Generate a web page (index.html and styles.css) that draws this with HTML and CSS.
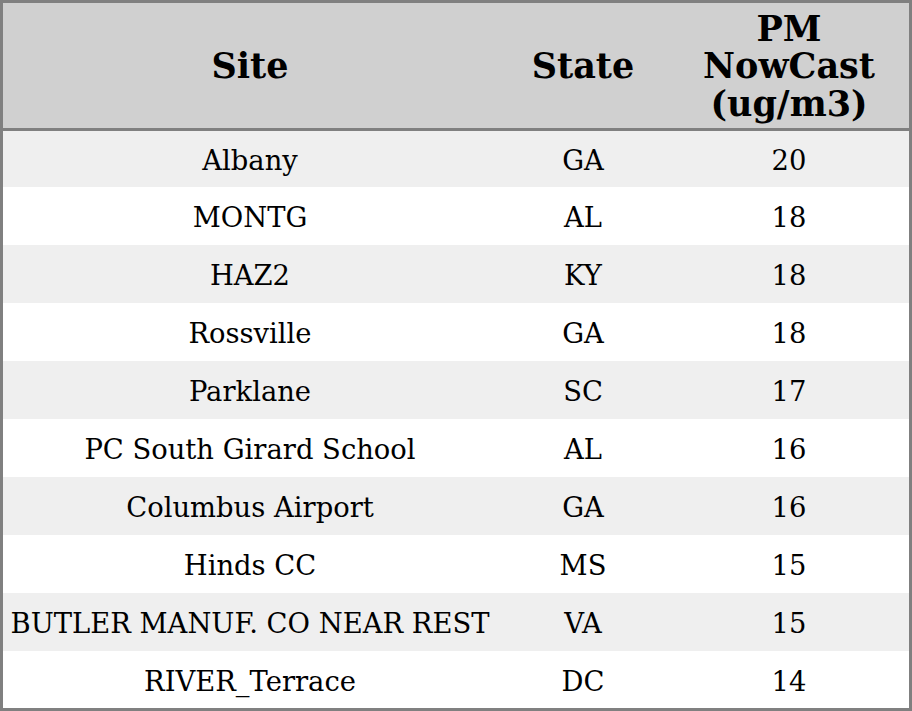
FILE: index.html
```html
<!DOCTYPE html>
<html>
<head>
<meta charset="utf-8">
<link rel="stylesheet" href="styles.css">
</head>
<body>
<table class="aq">
  <thead>
    <tr class="head">
      <th class="c-site">Site</th>
      <th class="c-state">State</th>
      <th class="c-pm">PM<br>NowCast<br>(ug/m3)</th>
    </tr>
  </thead>
  <tbody>
    <tr><td>Albany</td><td>GA</td><td>20</td></tr>
    <tr><td>MONTG</td><td>AL</td><td>18</td></tr>
    <tr><td>HAZ2</td><td>KY</td><td>18</td></tr>
    <tr><td>Rossville</td><td>GA</td><td>18</td></tr>
    <tr><td>Parklane</td><td>SC</td><td>17</td></tr>
    <tr><td>PC South Girard School</td><td>AL</td><td>16</td></tr>
    <tr><td>Columbus Airport</td><td>GA</td><td>16</td></tr>
    <tr><td>Hinds CC</td><td>MS</td><td>15</td></tr>
    <tr><td>BUTLER MANUF. CO NEAR REST</td><td>VA</td><td>15</td></tr>
    <tr><td>RIVER_Terrace</td><td>DC</td><td>14</td></tr>
  </tbody>
</table>
</body>
</html>
```
FILE: styles.css
```css
html, body {
  margin: 0;
  padding: 0;
  background: #ffffff;
}
.aq {
  width: 912px;
  border-collapse: separate;
  border-spacing: 0;
  border: 3px solid #808080;
  font-family: "DejaVu Serif", serif;
  color: #000;
}
.aq th, .aq td {
  padding: 0;
  text-align: center;
  vertical-align: middle;
}
.head th {
  height: 124px;
  padding-top: 1px;
  background: #d0d0d0;
  border-bottom: 3px solid #808080;
  font-size: 35px;
  font-weight: bold;
  line-height: 37.5px;
}
.c-site { width: 494px; }
.c-state { width: 172px; }
.c-pm { width: 240px; }
.aq td {
  height: 54px;
  padding-top: 4px;
  font-size: 27.4px;
  line-height: 32px;
}
.aq tbody tr:first-child td { height: 52px; }
.aq tbody tr:last-child td { height: 53px; }
.aq tbody tr:nth-child(odd) td { background: #efefef; }
```
